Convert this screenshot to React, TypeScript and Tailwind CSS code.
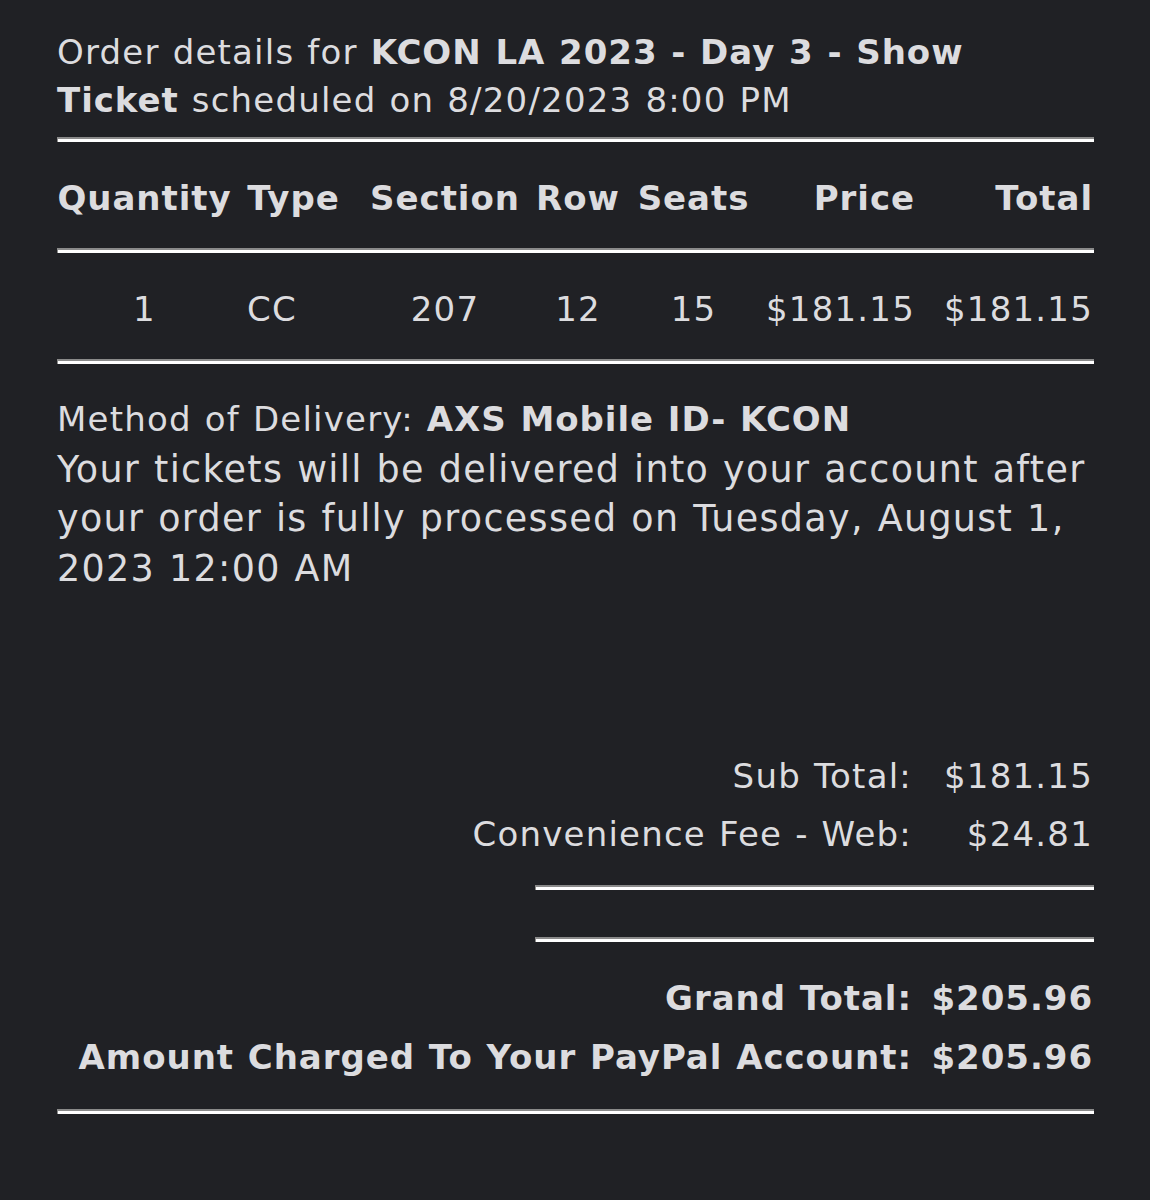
import React from "react";

function Hr({ className = "" }: { className?: string }) {
  return (
    <div className={`h-[5px] border-t-2 border-l border-[#8a8a8a] bg-white ${className}`} />
  );
}

export default function App() {
  return (
    <div
      className="w-[1150px] h-[1200px] bg-[#202125] text-[#dcdcdf] text-[34px] tracking-[1.2px] overflow-hidden"
      style={{ fontFamily: '"DejaVu Sans", Verdana, sans-serif', wordSpacing: "1px" }}
    >
      <div className="pl-[57px] pr-[56px] pt-[28px]">
        <div className="leading-[48px]">
          Order details for <b className="tracking-[0.95px]">KCON LA 2023 - Day 3 - Show Ticket</b> scheduled on 8/20/2023 8:00 PM
        </div>
        <Hr className="mt-[13px]" />
        <div className="grid grid-cols-[175px_123px_180px_86px_145px_152px_176px] font-bold tracking-[0.95px] leading-[50px] pt-[31px] pb-[25px] whitespace-nowrap">
          <div className="text-center">Quantity</div>
          <div className="text-center">Type</div>
          <div className="text-center">Section</div>
          <div className="text-center">Row</div>
          <div className="text-center">Seats</div>
          <div className="text-right pr-[3px]">Price</div>
          <div className="text-right pr-[1px]">Total</div>
        </div>
        <Hr />
        <div className="grid grid-cols-[175px_123px_180px_86px_145px_152px_176px] leading-[50px] pt-[31px] pb-[25px] whitespace-nowrap">
          <div className="text-center">1</div>
          <div className="text-left pl-[15px]">CC</div>
          <div className="text-center">207</div>
          <div className="text-center">12</div>
          <div className="text-center">15</div>
          <div className="text-right pr-[3px]">$181.15</div>
          <div className="text-right pr-[1px]">$181.15</div>
        </div>
        <Hr />
        <div className="leading-[49.5px] pt-[31px]">
          <div>
            Method of Delivery: <b className="tracking-[0.95px]">AXS Mobile ID- KCON</b>
          </div>
          <div className="text-[36.5px] tracking-[1.3px]">
            Your tickets will be delivered into your account after your order is fully processed on Tuesday, August 1, 2023 12:00 AM
          </div>
        </div>
        <div className="mt-[154px] grid grid-cols-[1fr_180px] leading-[58px] whitespace-nowrap">
          <div className="text-right pr-[2px]">Sub Total:</div>
          <div className="text-right pr-[1px]">$181.15</div>
          <div className="text-right pr-[2px]">Convenience Fee - Web:</div>
          <div className="text-right pr-[1px]">$24.81</div>
        </div>
        <Hr className="mt-[22px] ml-auto w-[559px]" />
        <Hr className="mt-[47px] ml-auto w-[559px]" />
        <div className="mt-[27px] grid grid-cols-[1fr_180px] leading-[59px] font-bold tracking-[0.95px] whitespace-nowrap">
          <div className="text-right pr-[2px]">Grand Total:</div>
          <div className="text-right pr-[1px]">$205.96</div>
          <div className="text-right pr-[2px]">Amount Charged To Your PayPal Account:</div>
          <div className="text-right pr-[1px]">$205.96</div>
        </div>
        <Hr className="mt-[22px]" />
      </div>
    </div>
  );
}
